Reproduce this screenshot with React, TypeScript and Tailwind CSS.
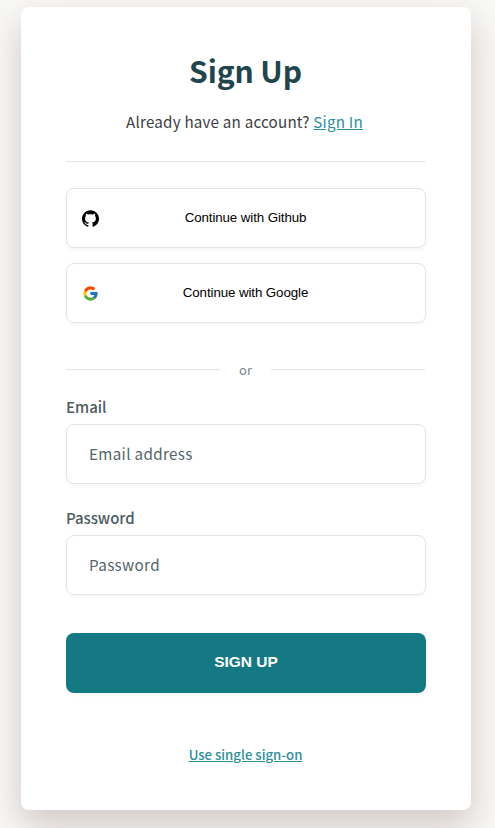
import React, { useState } from 'react';
import { FcGoogle } from 'react-icons/fc';
import { SiGithub } from 'react-icons/si';

const field =
  "h-[60px] w-full rounded-lg border border-[#e2e4e5] bg-white shadow-[0_2px_4px_rgba(0,0,0,0.04)]";

function SocialButton({ icon, children }: { icon: React.ReactNode; children: React.ReactNode }) {
  return (
    <button type="button" className={`${field} grid grid-cols-[46px_1fr_47px] items-center`}>
      <span className="flex justify-center">{icon}</span>
      <span className="text-center font-['Liberation_Sans',Arial,sans-serif] text-[13.333px] leading-4 tracking-[-0.1px] text-black">
        {children}
      </span>
    </button>
  );
}

export default function App() {
  const [email, setEmail] = useState('');
  const [password, setPassword] = useState('');

  return (
    <div className="h-[828px] overflow-hidden bg-[#f8f8f6] pt-[7px] pl-[21px] font-['Noto_Sans_CJK_SC',sans-serif]">
      <main className="h-[803px] w-[450px] rounded-lg bg-white px-[45px] shadow-[0_15px_35px_rgba(80,40,30,0.23)]">
        {/* Title */}
        <header className="h-[155px] border-b border-[#e2e4e5] pt-[39px] text-center">
          <h1 className="pr-px text-[30px] leading-[48px] font-bold tracking-[-0.1px] text-[#20454c]">Sign Up</h1>
          <p className="mt-[15px] pr-[3px] text-[15.2px] leading-6 tracking-[0.2px] text-[#3c4043]">
            Already have an account? <a href="#signin" className="text-[#2b8f9c] underline">Sign In</a>
          </p>
        </header>

        {/* Social sign up */}
        <div className="mt-[26px] flex flex-col gap-[15px]">
          <SocialButton icon={<SiGithub className="size-[17px] text-black" />}>Continue with Github</SocialButton>
          <SocialButton icon={<FcGoogle className="size-[17px]" />}>Continue with Google</SocialButton>
        </div>

        <div className="mt-[36px] mr-px flex h-5 items-center justify-between">
          <span className="h-px w-[154px] bg-[#e2e4e5]" />
          <span className="pt-0.5 text-[13px] leading-5 text-[#808485]">or</span>
          <span className="h-px w-[154px] bg-[#e2e4e5]" />
        </div>

        {/* Credentials */}
        <form onSubmit={(e) => e.preventDefault()}>
          <label htmlFor="email" className="mt-[16px] block h-6 text-[15px] leading-6 font-medium text-[#4b5c60]">Email</label>
          <input
            id="email"
            type="email"
            value={email}
            onChange={(e) => setEmail(e.target.value)}
            placeholder="Email address"
            className={`${field} mt-[5px] block px-[22px] pb-0.5 text-[15.2px] tracking-[0.35px] placeholder:text-[#53656a]`}
          />
          <label htmlFor="password" className="mt-[22px] block h-6 text-[15px] leading-6 font-medium tracking-[-0.05px] text-[#4b5c60]">Password</label>
          <input
            id="password"
            type="password"
            value={password}
            onChange={(e) => setPassword(e.target.value)}
            placeholder="Password"
            className={`${field} mt-[5px] block px-[22px] pb-0.5 text-[15.2px] tracking-[0.35px] placeholder:text-[#53656a]`}
          />
          <button
            type="submit"
            className="mt-[38px] h-[60px] w-full rounded-lg bg-[#157983] pb-0.5 font-['Liberation_Sans',Arial,sans-serif] text-[15.5px] font-bold text-white shadow-[0_2px_4px_rgba(0,0,0,0.04)]"
          >
            SIGN UP
          </button>
        </form>

        <div className="mt-[50px] pr-px text-center text-[13.2px] leading-6 font-medium">
          <a href="#sso" className="text-[#2b8f9c] underline">Use single sign-on</a>
        </div>
      </main>
    </div>
  );
}
